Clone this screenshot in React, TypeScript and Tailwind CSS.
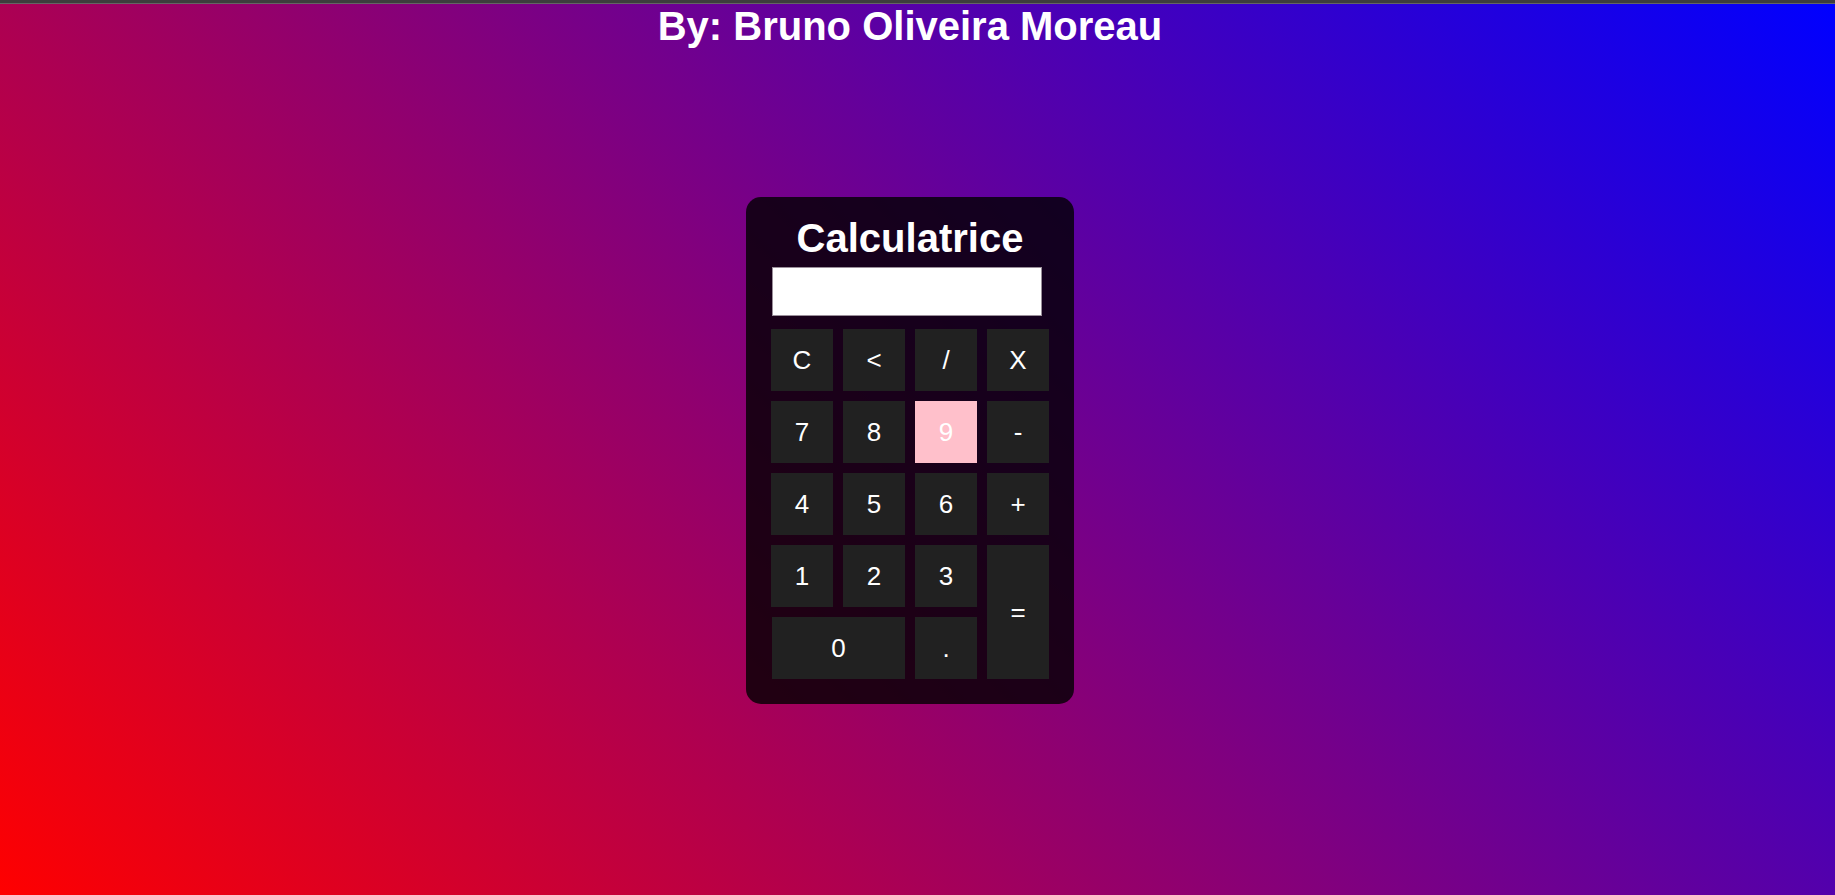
import React from 'react';

const keys: { label: string; cls?: string }[] = [
  { label: 'C' },
  { label: '<' },
  { label: '/' },
  { label: 'X' },
  { label: '7' },
  { label: '8' },
  { label: '9', cls: 'bg-[#ffc0cb]' },
  { label: '-' },
  { label: '4' },
  { label: '5' },
  { label: '6' },
  { label: '+' },
  { label: '1' },
  { label: '2' },
  { label: '3' },
  { label: '=', cls: 'row-span-2' },
  { label: '0', cls: 'col-span-2 ml-[1px]' },
  { label: '.' },
];

export default function App() {
  return (
    <div className="h-screen flex flex-col overflow-hidden font-['Liberation_Sans',Arial,sans-serif]">
      <div className="h-[4px] bg-[#3d3d3d] border-b border-[#646464]" />
      <div className="flex-1 flex flex-col bg-[linear-gradient(45deg,#ff0000,#0000ff)]">
        <h1 className="h-[46px] leading-[44px] text-[40px] font-bold text-white text-center pr-[15px]">
          By: Bruno Oliveira Moreau
        </h1>
        <div className="flex-1 flex items-center justify-center pb-[44px] pr-[15px]">
          <div className="w-[328px] rounded-[15px] bg-black/80 px-[25px] pt-[18px] pb-[25px] flex flex-col">
            <h2 className="text-[40px] leading-[46px] font-bold text-white text-center">Calculatrice</h2>
            <input
              readOnly
              className="mt-[6px] ml-[1px] w-[270px] h-[49px] bg-white border border-[#9a8f9a] outline-none"
            />
            <div className="mt-[13px] grid grid-cols-[repeat(4,62px)] auto-rows-[62px] gap-[10px]">
              {keys.map(k => (
                <button
                  key={k.label}
                  className={`flex items-center justify-center text-[26px] text-white ${k.cls ?? ''} ${k.label === '9' ? '' : 'bg-[#212121]'}`}
                >
                  {k.label}
                </button>
              ))}
            </div>
          </div>
        </div>
      </div>
    </div>
  );
}
